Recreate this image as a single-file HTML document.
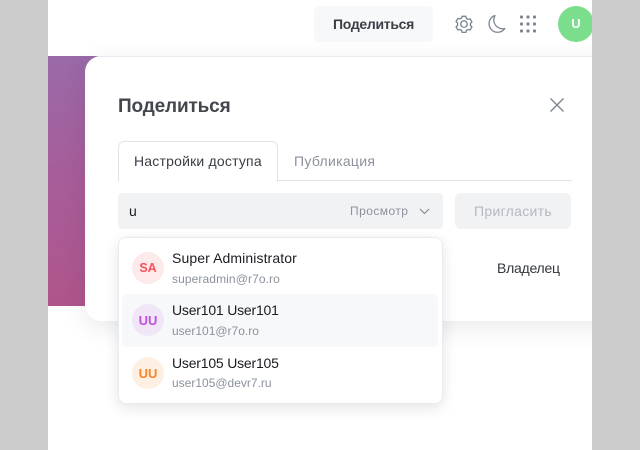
<!DOCTYPE html>
<html><head><meta charset="utf-8">
<style>
html,body{margin:0;padding:0;background:#ccc}
body{width:640px;height:450px;overflow:hidden;position:relative;font-family:"Liberation Sans",sans-serif}
.a{position:absolute;white-space:nowrap}
#page{left:48px;top:0;width:544px;height:450px;background:#fff;overflow:hidden}
.av{position:absolute;width:32px;height:32px;border-radius:50%;left:132px;text-align:center;font-size:13px;font-weight:bold;line-height:33px}
.n{left:172px;font-size:14px;color:#1a1c20;line-height:18px}
.m{left:172px;font-size:12px;color:#8b929c;line-height:16px}
</style></head><body>
<div class="a" id="page">
<div class="a" style="left:0;top:56px;width:100px;height:250px;background:linear-gradient(170deg,#9a6aa8 0%,#a85c98 50%,#b0548a 100%)"></div>
<div class="a" style="left:37px;top:56px;width:540px;height:265px;background:#fff;border-radius:16px 0 0 16px;box-shadow:0 6px 24px rgba(30,40,60,.1)"></div>
<div class="a" style="left:52px;top:56px;width:492px;height:1px;background:#e8eaee"></div>
</div>
<div class="a" style="left:314px;top:6px;width:119px;height:36px;background:#f7f8fa;border-radius:4px;text-align:center;font-size:14px;font-weight:bold;line-height:36px;color:#3a3e45;letter-spacing:-.3px">Поделиться</div>
<svg class="a" style="left:455px;top:15px" width="18" height="18" viewBox="0 0 20 20" fill="none" stroke="#7d8590" stroke-width="1.500" stroke-linejoin="round"><circle cx="10" cy="10" r="3.600"/><path d="M8 1.500h4l.7 2.300 1.700 1 2.400-.5 2 3.400-1.700 1.800v1.900l1.700 1.800-2 3.400-2.400-.5-1.700 1-.7 2.300H8l-.7-2.300-1.700-1-2.400.5-2-3.400 1.700-1.800V9l-1.700-1.800 2-3.400 2.400.5 1.700-1z"/></svg>
<svg class="a" style="left:485.500px;top:14px" width="20" height="20" viewBox="0 0 20 20" fill="none" stroke="#7d8590" stroke-width="1.300" stroke-linejoin="round"><path d="M9 1.500A8.600 8.600 0 1 0 18.800 14.500 8.800 8.800 0 0 1 9 1.500z"/></svg>
<svg class="a" style="left:519px;top:15px" width="18" height="18" fill="#7d8590"><circle cx="2.500" cy="2" r="1.600"/><circle cx="9" cy="2" r="1.600"/><circle cx="15.500" cy="2" r="1.600"/><circle cx="2.500" cy="9" r="1.600"/><circle cx="9" cy="9" r="1.600"/><circle cx="15.500" cy="9" r="1.600"/><circle cx="2.500" cy="16" r="1.600"/><circle cx="9" cy="16" r="1.600"/><circle cx="15.500" cy="16" r="1.600"/></svg>
<div class="a" style="left:558px;top:6px;width:34px;height:36px;overflow:hidden"><div style="width:36px;height:36px;border-radius:50%;background:#7ade8c;color:#fff;text-align:center;font-size:13px;font-weight:bold;line-height:36px">U</div></div>
<div class="a" style="left:118px;top:95px;font-size:19px;font-weight:bold;line-height:24px;color:#42464d;letter-spacing:-.15px">Поделиться</div>
<svg class="a" style="left:549px;top:97px" width="16" height="16" fill="none" stroke="#7d8590" stroke-width="1.400"><path d="M1.500 1.500l13 13M14.500 1.500l-13 13"/></svg>
<div class="a" style="left:118px;top:180px;width:454px;height:1px;background:#e0e3e8"></div>
<div class="a" style="left:118px;top:141px;width:158px;height:40px;border:1px solid #e0e3e8;border-bottom:0;border-radius:6px 6px 0 0;background:#fff;"></div>
<div class="a" style="left:134px;top:152px;font-size:14px;line-height:18px;color:#3a3e45;letter-spacing:.2px">Настройки доступа</div>
<div class="a" style="left:294px;top:152px;font-size:14px;line-height:18px;color:#8b929c;letter-spacing:.3px">Публикация</div>
<div class="a" style="left:118px;top:193px;width:325px;height:36px;background:#f1f2f4;border-radius:4px"></div>
<div class="a" style="left:129px;top:202px;font-size:14px;line-height:18px;color:#1a1c20">u</div>
<div class="a" style="left:350px;top:203px;font-size:12px;line-height:16px;color:#8b929c;letter-spacing:.45px">Просмотр</div>
<svg class="a" style="left:419px;top:208px" width="11" height="7" fill="none" stroke="#7d8590" stroke-width="1.100"><path d="M1 1l4.500 4.500L10 1"/></svg>
<div class="a" style="left:455px;top:193px;width:116px;height:36px;background:#f1f2f4;border-radius:6px;text-align:center;font-size:14px;line-height:36px;color:#b4b9c0;letter-spacing:.3px">Пригласить</div>
<div class="a" style="left:497px;top:259px;font-size:14px;line-height:18px;color:#33373d;letter-spacing:-.25px">Владелец</div>
<div class="a" style="left:117.500px;top:237px;width:323.500px;height:165px;background:#fff;border:1px solid #e9ebee;border-radius:8px;box-shadow:0 4px 14px rgba(30,40,60,.12)"></div>
<div class="a" style="left:122px;top:294px;width:316px;height:53px;background:#f7f8fa;border-radius:4px"></div>
<div class="av" style="top:252px;background:#fdeaea;color:#fb5058;font-size:12.500px">SA</div>
<div class="av" style="top:304px;background:#f1e6f8;color:#c04fe0">UU</div>
<div class="av" style="top:357px;background:#feefe3;color:#fb8424">UU</div>
<div class="a n" style="top:249px;letter-spacing:.1px">Super Administrator</div>
<div class="a m" style="top:271px;letter-spacing:.1px">superadmin@r7o.ro</div>
<div class="a n" style="top:301px;letter-spacing:-.2px">User101 User101</div>
<div class="a m" style="top:323px">user101@r7o.ro</div>
<div class="a n" style="top:354px;letter-spacing:-.2px">User105 User105</div>
<div class="a m" style="top:375px">user105@devr7.ru</div>
</body></html>
